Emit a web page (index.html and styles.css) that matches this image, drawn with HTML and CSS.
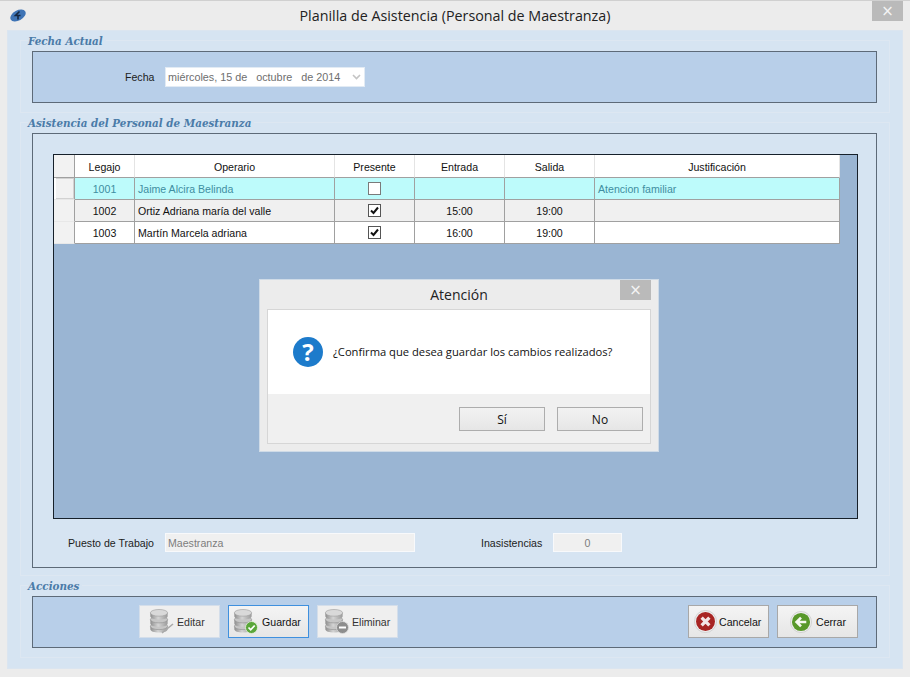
FILE: index.html
```html
<!DOCTYPE html>
<html lang="es">
  <head>
    <meta charset="UTF-8" />
    <title>Planilla de Asistencia (Personal de Maestranza)</title>
    <link rel="stylesheet" href="styles.css">
  </head>
  <body>
    <svg class="defs" width="0" height="0">
      <defs>
        <linearGradient id="slab" x1="0" x2="1" y1="0" y2="0">
          <stop offset="0" stop-color="#8e8e8e" />
          <stop offset="0.45" stop-color="#d4d4d4" />
          <stop offset="1" stop-color="#9a9a9a" />
        </linearGradient>
        <symbol id="db" viewBox="0 0 20 25">
          <path d="M1 18v3c0 2 4 3.500 9 3.500s9-1.500 9-3.500v-3z" fill="url(#slab)" />
          <ellipse cx="10" cy="18" rx="9" ry="3.500" fill="#c6c6c6" stroke="#8b8b8b" stroke-width="0.6" />
          <path d="M1 11v4c0 2 4 3.500 9 3.500s9-1.500 9-3.500v-4z" fill="url(#slab)" />
          <ellipse cx="10" cy="11" rx="9" ry="3.500" fill="#c6c6c6" stroke="#8b8b8b" stroke-width="0.6" />
          <path d="M1 4v3.500c0 2 4 3.500 9 3.500s9-1.500 9-3.500V4z" fill="url(#slab)" />
          <ellipse cx="10" cy="4" rx="9" ry="3.500" fill="#d9d9d9" stroke="#9a9a9a" stroke-width="0.6" />
        </symbol>
      </defs>
    </svg>

    <div class="window">
      <header class="titlebar">
        <svg class="app-icon" width="16" height="13" viewBox="0 0 16 13">
          <ellipse cx="8" cy="6.500" rx="8.300" ry="5" transform="rotate(-28 8 6.500)" fill="#3f74b5" />
          <path d="M9.500 2.500 5.500 6.500h5M8 6.500v4" stroke="#14263f" stroke-width="1.600" fill="none" />
        </svg>
        <h1 class="window-title">Planilla de Asistencia (Personal de Maestranza)</h1>
        <button class="close-btn" type="button">×</button>
      </header>

      <main class="panel">
        <section class="group">
          <h2 class="legend">Fecha Actual</h2>
          <div class="box box-date">
            <label class="label label-date">Fecha</label>
            <div class="datepicker">
              <span class="date-text">miércoles, 15 de   octubre   de 2014</span>
              <svg width="9" height="6" viewBox="0 0 9 6"><path d="M1 1l3.500 3.500L8 1" stroke="#c4c4c4" stroke-width="1.600" fill="none" /></svg>
            </div>
          </div>
        </section>

        <section class="group group-grid">
          <h2 class="legend">Asistencia del Personal de Maestranza</h2>
          <div class="box box-grid">
            <div class="grid">
              <table class="attendance">
                <colgroup>
                  <col class="col-head" /><col class="col-id" /><col class="col-name" /><col class="col-check" />
                  <col class="col-time" /><col class="col-time" /><col class="col-note" />
                </colgroup>
                <thead>
                  <tr>
                    <th class="row-head"></th>
                    <th>Legajo</th>
                    <th>Operario</th>
                    <th>Presente</th>
                    <th>Entrada</th>
                    <th>Salida</th>
                    <th>Justificación</th>
                  </tr>
                </thead>
                <tbody>
                  <tr class="selected">
                    <td class="row-head"></td>
                    <td class="center">1001</td>
                    <td>Jaime Alcira Belinda</td>
                    <td class="center"><span class="check"></span></td>
                    <td class="center"></td>
                    <td class="center"></td>
                    <td>Atencion familiar</td>
                  </tr>
                  <tr class="alt">
                    <td class="row-head"></td>
                    <td class="center">1002</td>
                    <td>Ortiz Adriana maría del valle</td>
                    <td class="center"><span class="check checked"><svg width="11" height="11" viewBox="0 0 11 11"><path d="M2 5.500l2.500 2.500L9 2.500" stroke="#111" stroke-width="2" fill="none" /></svg></span></td>
                    <td class="center">15:00</td>
                    <td class="center">19:00</td>
                    <td></td>
                  </tr>
                  <tr>
                    <td class="row-head"></td>
                    <td class="center">1003</td>
                    <td>Martín Marcela adriana</td>
                    <td class="center"><span class="check checked"><svg width="11" height="11" viewBox="0 0 11 11"><path d="M2 5.500l2.500 2.500L9 2.500" stroke="#111" stroke-width="2" fill="none" /></svg></span></td>
                    <td class="center">16:00</td>
                    <td class="center">19:00</td>
                    <td></td>
                  </tr>
                </tbody>
              </table>
            </div>
            <div class="fields">
              <label class="label label-job">Puesto de Trabajo</label>
              <div class="readonly readonly-job">Maestranza</div>
              <label class="label label-absent">Inasistencias</label>
              <div class="readonly readonly-count">0</div>
            </div>
          </div>
        </section>

        <section class="group">
          <h2 class="legend">Acciones</h2>
          <div class="box box-actions">
            <button class="btn btn-edit" type="button" disabled>
              <span class="btn-icon">
                <svg class="db" width="20" height="24"><use href="#db" /></svg>
                <svg class="badge" width="13" height="13" viewBox="0 0 13 13"><path d="M1 12 12 3" stroke="#a9a9a9" stroke-width="1.600" /></svg>
              </span>
              Editar
            </button>
            <button class="btn btn-save btn-focus" type="button">
              <span class="btn-icon">
                <svg class="db" width="20" height="24"><use href="#db" /></svg>
                <svg class="badge" width="13" height="13" viewBox="0 0 13 13"><circle cx="6.500" cy="6.500" r="6" fill="#5aa63a" stroke="#e8f3e0" stroke-width="0.800" /><path d="M3.500 6.500l2.200 2.300 4-4.300" stroke="#fff" stroke-width="1.800" fill="none" /></svg>
              </span>
              Guardar
            </button>
            <button class="btn btn-delete" type="button" disabled>
              <span class="btn-icon">
                <svg class="db" width="20" height="24"><use href="#db" /></svg>
                <svg class="badge" width="13" height="13" viewBox="0 0 13 13"><circle cx="6.500" cy="6.500" r="6" fill="#8d8d8d" stroke="#ddd" stroke-width="0.800" /><path d="M3 6.500h7" stroke="#fff" stroke-width="2" /></svg>
              </span>
              Eliminar
            </button>
            <span class="spacer"></span>
            <button class="btn btn-cancel btn-on" type="button">
              <svg width="23" height="23" viewBox="0 0 25 25">
                <circle cx="12.500" cy="12.500" r="12" fill="#eee" stroke="#c8c8c8" stroke-width="0.800" />
                <circle cx="12.500" cy="12.500" r="10.300" fill="#a82523" />
                <path d="M8.300 8.300l8.400 8.400M16.700 8.300l-8.400 8.400" stroke="#f3e6e6" stroke-width="3.600" />
              </svg>
              Cancelar
            </button>
            <button class="btn btn-close btn-on" type="button">
              <svg width="22" height="22" viewBox="0 0 25 25">
                <circle cx="12.500" cy="12.500" r="12" fill="#eee" stroke="#c8c8c8" stroke-width="0.800" />
                <circle cx="12.500" cy="12.500" r="10.300" fill="#58982a" />
                <path d="M18.500 12.500H8M12.500 7.500l-5 5 5 5" stroke="#f4f8ee" stroke-width="3" fill="none" />
              </svg>
              Cerrar
            </button>
          </div>
        </section>
      </main>

      <div class="dialog">
        <header class="dialog-bar">
          <h3 class="dialog-title">Atención</h3>
          <button class="close-btn close-btn-dialog" type="button">×</button>
        </header>
        <div class="dialog-body">
          <div class="dialog-message">
            <span class="question">?</span>
            <p>¿Confirma que desea guardar los cambios realizados?</p>
          </div>
          <div class="dialog-buttons">
            <button class="dialog-btn" type="button">Sí</button>
            <button class="dialog-btn" type="button">No</button>
          </div>
        </div>
      </div>
    </div>
  </body>
</html>
```

FILE: styles.css
```css
* {
  box-sizing: border-box;
}
html,
body {
  margin: 0;
  height: 100%;
  overflow: hidden;
}
body {
  font-family: "Liberation Sans", Arial, sans-serif;
  font-size: 10.6px;
  color: #111;
}
.defs {
  display: block;
  height: 0;
}

/* Window */
.window {
  position: relative;
  display: flex;
  flex-direction: column;
  height: 677px;
  background: #ececec;
  border-top: 1px solid #d0d0d0;
}
.titlebar {
  display: grid;
  grid-template-columns: 1fr auto 1fr;
  height: 29px;
  flex: none;
}
.app-icon {
  margin: 8px 0 0 10px;
}
.window-title {
  margin: 6px 0 0;
  font-family: "Open Sans", sans-serif;
  font-size: 14.3px;
  font-weight: 400;
  line-height: 18px;
  color: #222;
}
.close-btn {
  justify-self: end;
  width: 31px;
  height: 20px;
  margin: 0 7px 0 0;
  padding: 0;
  border: none;
  background: #bababa;
  color: #f4f4f4;
  font-family: "DejaVu Sans", sans-serif;
  font-size: 15px;
  line-height: 18px;
}

/* Main panel and group boxes */
.panel {
  display: flex;
  flex-direction: column;
  gap: 9px;
  width: 896px;
  height: 639px;
  margin-left: 7px;
  padding: 9px 12px 0 12px;
  background: #d6e4f2;
  border: 1px solid #dbe5f0;
}
.group {
  padding: 0 12px 9px 11px;
  border: 1px solid #dde7f2;
}
.group-grid {
  padding-bottom: 7px;
}
.legend {
  width: fit-content;
  height: 19px;
  margin: -9px 0 0 -4px;
  padding: 0 3px 0 0;
  background: #d6e4f2;
  font-family: "DejaVu Serif Condensed", "DejaVu Serif", serif;
  font-size: 11.5px;
  font-weight: 700;
  font-style: italic;
  line-height: 18px;
  color: #4a7ba8;
}
.box {
  border: 1px solid #5d6a78;
}
.box-date,
.box-actions {
  display: flex;
  height: 52px;
  background: #b8cfe9;
}
.box-date {
  align-items: center;
  padding-left: 92px;
}
.label {
  color: #1c1c1c;
  white-space: nowrap;
}
.label-date {
  width: 40px;
}
.datepicker {
  display: flex;
  align-items: center;
  justify-content: space-between;
  width: 200px;
  height: 20px;
  padding: 0 3px 0 2px;
  background: #fff;
  border: 1px solid #e2ebf4;
  color: #6e6e6e;
}
.date-text {
  font-size: 10.8px;
  white-space: pre;
}

/* Attendance grid */
.box-grid {
  height: 435px;
  padding: 20px 18px 0 20px;
}
.grid {
  height: 365px;
  background: #9ab5d3;
  border: 1px solid #16202a;
}
.attendance {
  table-layout: fixed;
  width: 786px;
  border-collapse: separate;
  border-spacing: 0;
}
.col-head { width: 21px; }
.col-id { width: 60px; }
.col-name { width: 200px; }
.col-check { width: 80px; }
.col-time { width: 90px; }
.col-note { width: 245px; }
.attendance th,
.attendance td {
  height: 22px;
  padding: 0 3px;
  border-right: 1px solid #a0a0a0;
  border-bottom: 1px solid #a0a0a0;
  background: #fff;
  overflow: hidden;
  white-space: nowrap;
}
.attendance th {
  height: 23px;
  padding-top: 2px;
  border-right-color: #e4e4e4;
  font-weight: 400;
  text-align: center;
}
.attendance .row-head {
  padding: 0;
  background: #f2f2f2;
  border-right-color: #a0a0a0;
  border-bottom-color: #e8e8e8;
}
.attendance thead .row-head {
  border-bottom-color: #a0a0a0;
}
.attendance .center {
  text-align: center;
}
.selected td {
  background: #bdfbfb;
  color: #3f8ea1;
}
.selected .row-head {
  box-shadow: inset 2px 0 0 #fff, inset 0 0 0 1px #d2d2d2;
}
.alt td {
  background: #f0f0f0;
}
.check {
  display: inline-flex;
  align-items: center;
  justify-content: center;
  width: 13px;
  height: 13px;
  vertical-align: middle;
  background: #fff;
  border: 1px solid #7a7a7a;
}
.checked {
  border-color: #555;
}

/* Fields under the grid */
.fields {
  display: flex;
  align-items: center;
  margin-top: 14px;
  padding-left: 15px;
}
.readonly {
  height: 19px;
  background: #f0f0f0;
  border: 1px solid #f8f9fb;
  color: #7d7d7d;
  line-height: 18px;
}
.label-job {
  width: 97px;
}
.readonly-job {
  width: 250px;
  padding-left: 2px;
}
.label-absent {
  width: 72px;
  margin-left: 66px;
}
.readonly-count {
  width: 69px;
  text-align: center;
}

/* Action buttons */
.box-actions {
  align-items: flex-start;
  gap: 8px;
  padding: 8px 18px 0 106px;
}
.spacer {
  flex: 1;
}
.btn {
  display: flex;
  align-items: center;
  width: 81px;
  height: 33px;
  background: #efefef;
  border: 1px solid #d4deea;
  color: #333;
  font-family: "Liberation Sans", Arial, sans-serif;
  font-size: 10.6px;
}
.btn-edit { padding: 0 0 0 9px; gap: 3px; }
.btn-save { padding: 0 0 0 4px; gap: 4px; }
.btn-delete { padding: 0 0 0 6px; gap: 3px; }
.btn-cancel { padding: 0 0 0 5px; gap: 2px; }
.btn-close { padding: 0 0 0 12px; gap: 4px; }
.btn-on,
.btn-focus {
  background: linear-gradient(#f4f4f4, #e6e6e6);
  color: #111;
}
.btn-on {
  border-color: #a8a8a8;
}
.btn-focus {
  border-color: #3f90de;
}
.btn-icon {
  position: relative;
  display: flex;
  width: 25px;
  height: 25px;
}
.badge {
  position: absolute;
  right: 0;
  bottom: 0;
}

/* Confirmation dialog */
.dialog {
  position: absolute;
  left: 259px;
  top: 278px;
  display: flex;
  flex-direction: column;
  width: 400px;
  height: 173px;
  padding: 0 7px 7px;
  background: #ececec;
  border: 1px solid #cfdbe7;
}
.dialog-bar {
  position: relative;
  flex: none;
  height: 29px;
  text-align: center;
}
.dialog-title {
  margin: 0;
  font-family: "Open Sans", sans-serif;
  font-size: 14px;
  font-weight: 400;
  line-height: 30px;
  color: #222;
}
.close-btn-dialog {
  position: absolute;
  right: 0;
  top: 0;
  margin: 0;
}
.dialog-body {
  flex: 1;
  display: flex;
  flex-direction: column;
  border: 1px solid #d6d6d6;
  background: #f0f0f0;
}
.dialog-message {
  display: flex;
  align-items: center;
  gap: 10px;
  height: 84px;
  padding-left: 25px;
  background: #fff;
}
.dialog-message p {
  margin: 0 0 2px;
  font-family: "Open Sans", sans-serif;
  font-size: 11.2px;
  color: #111;
}
.question {
  width: 30px;
  height: 30px;
  border-radius: 50%;
  background: #1d7bcb;
  color: #fff;
  font-family: "Open Sans", sans-serif;
  font-size: 24px;
  font-weight: 700;
  line-height: 30px;
  text-align: center;
}
.dialog-buttons {
  display: flex;
  justify-content: flex-end;
  gap: 12px;
  padding: 13px 7px 0 0;
}
.dialog-btn {
  width: 86px;
  height: 24px;
  padding: 0;
  background: linear-gradient(#f2f2f2, #e6e6e6);
  border: 1px solid #adadad;
  color: #111;
  font-family: "Open Sans", sans-serif;
  font-size: 12px;
}
```
